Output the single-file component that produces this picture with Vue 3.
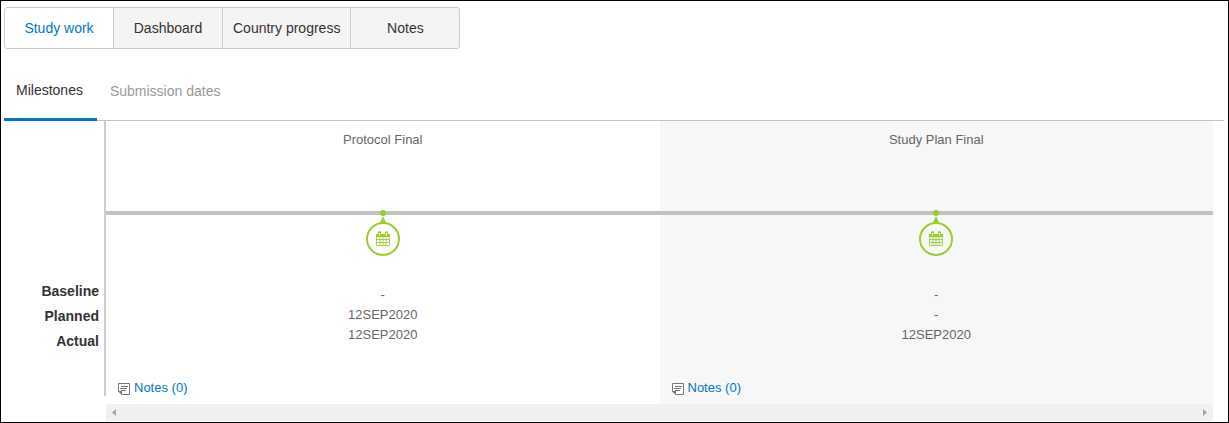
<script setup>
import { ref } from 'vue'

const views = ['Study work', 'Dashboard', 'Country progress', 'Notes']
const activeView = ref('Study work')
const tabs = ['Milestones', 'Submission dates']
const activeTab = ref('Milestones')
const labels = ['Baseline', 'Planned', 'Actual']
const milestones = [
  { title: 'Protocol Final', dates: ['-', '12SEP2020', '12SEP2020'], notes: 0 },
  { title: 'Study Plan Final', dates: ['-', '-', '12SEP2020'], notes: 0 },
]
</script>

<template>
  <main class="page">
    <nav class="views">
      <button
        v-for="view in views"
        :key="view"
        type="button"
        class="view"
        :class="{ active: view === activeView }"
        @click="activeView = view"
      >{{ view }}</button>
    </nav>

    <div class="tabs" role="tablist">
      <button
        v-for="tab in tabs"
        :key="tab"
        type="button"
        role="tab"
        class="tab"
        :class="{ active: tab === activeTab }"
        :aria-selected="tab === activeTab"
        @click="activeTab = tab"
      >{{ tab }}</button>
    </div>

    <div class="board">
      <div class="labels">
        <div v-for="label in labels" :key="label">{{ label }}</div>
      </div>

      <div class="timeline">
        <div class="columns">
          <section v-for="item in milestones" :key="item.title" class="milestone">
            <div class="title">{{ item.title }}</div>
            <div class="marker">
              <svg width="34" height="46" viewBox="0 0 34 46" aria-hidden="true">
                <circle cx="17" cy="3" r="3" fill="#9acd32" />
                <path d="M17 6 20.5 13.5h-7z" fill="#9acd32" />
                <circle cx="17" cy="29" r="16" fill="none" stroke="#9acd32" stroke-width="2" />
                <path d="M10.5 25v10.5h13V25M14 26v9M17 26v9M20 26v9M11 29.5h12M11 32.5h12" fill="none" stroke="#9acd32" stroke-width="0.9" />
                <path d="M10 24h14v3H10z" fill="#9acd32" />
                <path d="M13.5 22.5v3M20.5 22.5v3" stroke="#9acd32" stroke-width="3" stroke-linecap="round" />
                <path d="M13.5 23v2.5M20.5 23v2.5" stroke="#fff" stroke-width="1" />
              </svg>
            </div>
            <div class="dates">
              <div v-for="(date, i) in item.dates" :key="i">{{ date }}</div>
            </div>
            <a class="notes" href="#">
              <svg width="12" height="12" viewBox="0 0 12 12" aria-hidden="true">
                <path d="M.5.5h11v11H4L.5 8z" fill="#fff" stroke="#777" />
                <path d="M0 8h4v4z" fill="#777" />
                <path d="M3 3.5h7M2 5.5h7M3 7.5h5" stroke="#777" fill="none" />
              </svg>
              <span>Notes ({{ item.notes }})</span>
            </a>
          </section>
        </div>
        <div class="scrollbar">
          <button type="button" aria-label="Scroll left">
            <svg width="4" height="7" viewBox="0 0 4 7"><path d="M4 0v7L0 3.5z" fill="#a3a3a3" /></svg>
          </button>
          <button type="button" aria-label="Scroll right">
            <svg width="4" height="7" viewBox="0 0 4 7"><path d="M0 0v7l4-3.5z" fill="#a3a3a3" /></svg>
          </button>
        </div>
      </div>
    </div>
  </main>
</template>

<style>
body {
  margin: 0;
  background: #fff;
}
</style>

<style scoped>
.page {
  box-sizing: border-box;
  min-height: 100vh;
  padding: 6px 4px 0 3px;
  border: 1px solid #000;
  font-family: "Liberation Sans", Arial, sans-serif;
  font-size: 14px;
  color: #333;
}
button {
  margin: 0;
  border: 0;
  background: none;
  font: inherit;
  color: inherit;
  cursor: pointer;
}
.views {
  display: flex;
}
.view {
  box-sizing: border-box;
  min-width: 110px;
  height: 42px;
  padding: 0 10px;
  border: 1px solid #ccc;
  background: #f4f4f4;
}
.view + .view {
  margin-left: -1px;
}
.view:first-child {
  border-radius: 3px 0 0 3px;
}
.view:last-child {
  border-radius: 0 3px 3px 0;
}
.view.active {
  background: #fff;
  color: #0077c8;
}
.tabs {
  display: flex;
  margin-top: 13px;
  border-bottom: 1px solid #c4c4c4;
}
.tab {
  height: 59px;
  margin-bottom: -1px;
  padding: 0 13px 2px;
  color: #999;
}
.tab.active {
  padding: 0 14px 0 12px;
  border-bottom: 3px solid #0077c8;
  color: #333;
}
.board {
  display: flex;
  align-items: flex-start;
}
.labels {
  box-sizing: border-box;
  flex: 0 0 102px;
  padding: 158px 5px 42px 0;
  border-right: 2px solid #ccc;
  font-weight: bold;
  line-height: 25px;
  text-align: right;
}
.timeline {
  flex: 1;
  min-width: 0;
  margin-right: 11px;
}
.columns {
  display: flex;
}
.milestone {
  flex: 1;
  padding: 9px 0 6px;
  font-size: 13px;
  line-height: 20px;
  text-align: center;
  color: #666;
}
.milestone:nth-child(even) {
  background: #f7f7f7;
}
.marker {
  position: relative;
  display: flex;
  justify-content: center;
  margin-top: 60px;
}
.marker::before {
  content: "";
  position: absolute;
  top: 1px;
  left: 0;
  right: 0;
  height: 4px;
  background: #c2c2c2;
}
.marker svg {
  position: relative;
}
.dates {
  margin-top: 29px;
}
.notes {
  display: flex;
  align-items: center;
  gap: 4px;
  width: max-content;
  margin: 33px 0 0 12px;
  color: #0077c8;
  text-decoration: none;
}
.notes svg {
  margin-top: 2px;
}
.scrollbar {
  display: flex;
  justify-content: space-between;
  height: 17px;
  background: #f0f0f0;
}
.scrollbar button {
  display: flex;
  align-items: center;
  padding: 0 6px;
}
</style>
